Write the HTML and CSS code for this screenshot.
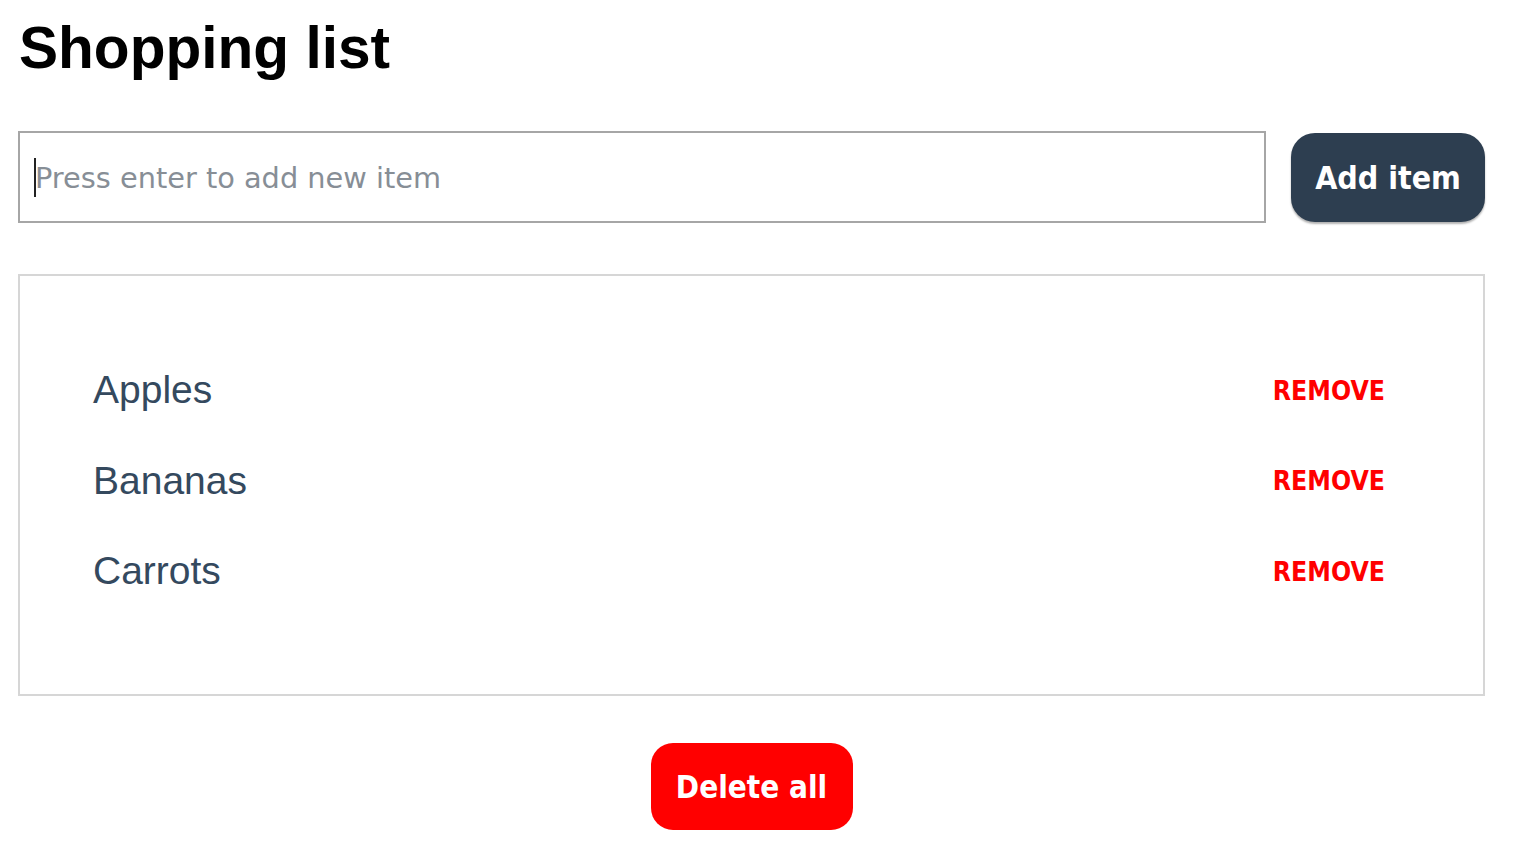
FILE: index.html
```html
<!DOCTYPE html>
<html lang="en">
<head>
<meta charset="utf-8">
<title>Shopping list</title>
<link rel="stylesheet" href="styles.css">
</head>
<body>
<div class="app">
  <h1 class="title">Shopping list</h1>
  <div class="add-row">
    <div class="field">
      <input class="new-item" type="text" placeholder="Press enter to add new item">
      <span class="caret"></span>
    </div>
    <button class="btn btn-add">Add item</button>
  </div>
  <div class="list-box">
    <ul class="items">
      <li class="item"><span class="item-name">Apples</span><button class="remove">REMOVE</button></li>
      <li class="item"><span class="item-name">Bananas</span><button class="remove">REMOVE</button></li>
      <li class="item"><span class="item-name">Carrots</span><button class="remove">REMOVE</button></li>
    </ul>
  </div>
  <div class="footer">
    <button class="btn btn-delete">Delete all</button>
  </div>
</div>
</body>
</html>
```

FILE: styles.css
```css
html, body {
  margin: 0;
  padding: 0;
  background: #ffffff;
}

.app {
  width: 1467px;
  margin-left: 18px;
  font-family: "Liberation Sans", Arial, sans-serif;
}

.title {
  margin: 15px 0 50px 1px;
  font-size: 58.6px;
  line-height: 66px;
  font-weight: bold;
  color: #000000;
}

.add-row {
  display: flex;
  align-items: center;
  gap: 25px;
}

.field {
  position: relative;
  width: 1248px;
  flex: none;
}

.new-item {
  box-sizing: border-box;
  width: 100%;
  height: 92px;
  margin: 0;
  padding: 2px 15px 0;
  border: 2px solid #a6a6a6;
  border-radius: 0;
  outline: none;
  background: #ffffff;
  font-family: "DejaVu Sans", Verdana, sans-serif;
  font-size: 28.8px;
  color: #2c3e50;
}

.new-item::placeholder {
  color: #878e96;
  opacity: 1;
}

.caret {
  position: absolute;
  left: 16px;
  top: 27px;
  width: 2px;
  height: 39px;
  background: #222222;
}

.btn {
  border: none;
  cursor: pointer;
  color: #ffffff;
  font-family: "DejaVu Sans Condensed", "DejaVu Sans", sans-serif;
  font-stretch: condensed;
  font-weight: bold;
  padding: 0;
}

.btn-add {
  width: 195px;
  height: 89px;
  border-radius: 24px;
  background: #2d3e50;
  font-size: 31.8px;
  box-shadow: 0 2px 2px rgba(0, 0, 0, 0.3);
}

.list-box {
  box-sizing: border-box;
  margin-top: 51px;
  height: 422px;
  border: 2px solid #d6d6d6;
  padding: 69px 98px 0 73px;
}

.items {
  list-style: none;
  margin: 0;
  padding: 0;
}

.item {
  display: flex;
  align-items: center;
  justify-content: space-between;
  height: 90.5px;
}

.item-name {
  font-family: "Liberation Sans", Arial, sans-serif;
  font-size: 39px;
  line-height: 46px;
  color: #34495e;
}

.remove {
  border: none;
  background: none;
  padding: 0;
  cursor: pointer;
  color: #ff0000;
  font-family: "DejaVu Sans Condensed", "DejaVu Sans", sans-serif;
  font-stretch: condensed;
  font-weight: bold;
  font-size: 26.4px;
}

.footer {
  display: flex;
  justify-content: center;
  margin-top: 47px;
}

.btn-delete {
  width: 202px;
  height: 87px;
  border-radius: 22px;
  background: #ff0000;
  font-size: 31.2px;
}
```
